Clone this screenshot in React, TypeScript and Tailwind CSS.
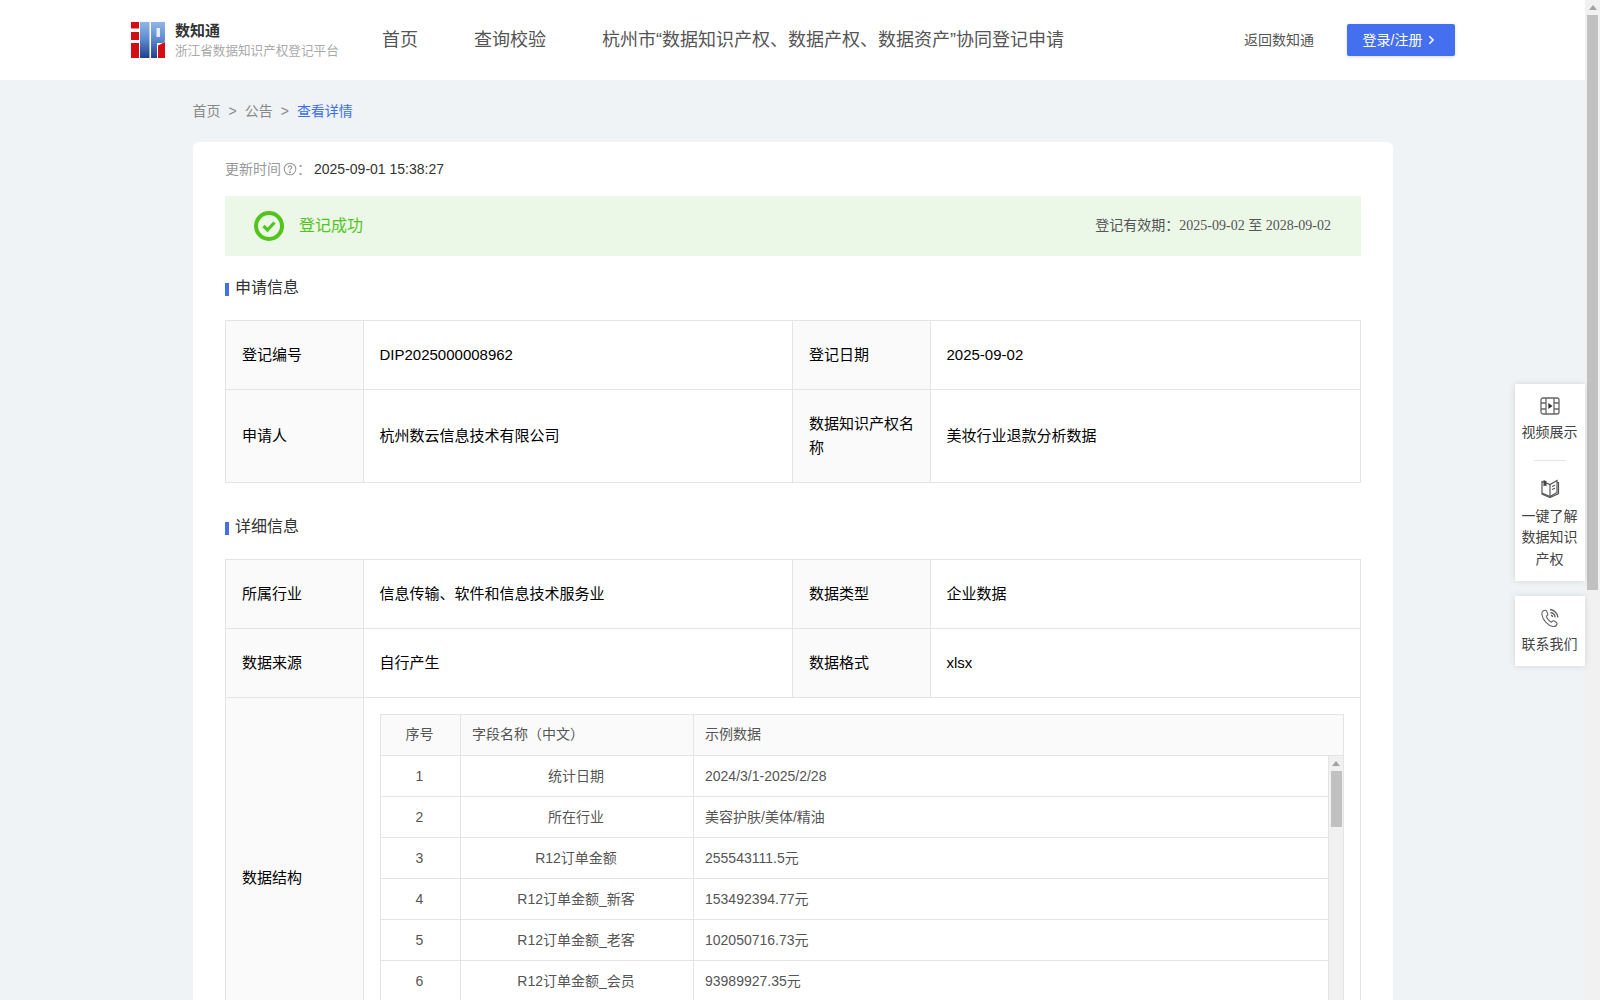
import React from "react";

const Logo = () => (
  <svg width="34" height="36" viewBox="0 0 34 36" className="shrink-0">
    <defs>
      <linearGradient id="lg" x1="0" y1="0" x2="0" y2="1">
        <stop offset="0" stopColor="#8fb6e8" />
        <stop offset="0.45" stopColor="#5f8fd2" />
        <stop offset="1" stopColor="#1f3f90" />
      </linearGradient>
    </defs>
    <rect x="0" y="0" width="8" height="6.5" fill="#d40d12" />
    <rect x="0" y="10" width="8" height="8" fill="#d40d12" />
    <rect x="0" y="21" width="8" height="15" fill="#d40d12" />
    <rect x="9" y="0" width="9.5" height="36" fill="url(#lg)" />
    <path d="M20 0H34V18C34 20 32.5 21 31 21H26V36H20Z" fill="url(#lg)" />
    <rect x="25.5" y="6" width="3.5" height="9" fill="#e6effa" />
    <path d="M27 23.5L34 20V36H27Z" fill="#d40d12" />
  </svg>
);

const VideoIcon = () => (
  <svg width="20" height="20" viewBox="0 0 20 20" fill="none" stroke="#666" strokeWidth="1.3">
    <rect x="1" y="2" width="18" height="16" rx="2" />
    <path d="M6 2V18M14 2V18M1 7H6M1 13H6M14 7H19M14 13H19" />
    <path d="M8.3 7L12.5 10L8.3 13Z" fill="#333" stroke="none" />
  </svg>
);

const BookIcon = () => (
  <svg width="20" height="20" viewBox="0 0 20 20" fill="none" stroke="#555" strokeWidth="1.2">
    <path d="M2 3.5L10 6.5L17 2.5V14.5L10 18.5L2 15Z" />
    <path d="M10 6.5V18.5M17 4.5H18.5V15.5L10 19.5L1.5 16" />
    <path d="M3.5 2L6.5 3.2V8.5L5 7.5L3.5 8.5Z" fill="#444" stroke="none" />
    <path d="M12 8.5L15 7.2M12 11.5L15 10.2" />
  </svg>
);

const PhoneIcon = () => (
  <svg width="20" height="20" viewBox="0 0 20 20" fill="none" stroke="#666" strokeWidth="1.1" strokeLinejoin="round">
    <path d="M5 2.2C3 2.6 1.6 4.2 1.9 6.5C2.6 11.8 7.6 17.6 13 18.5C15 18.8 16.6 17.6 17 16C17.2 15.2 16.8 14.7 16.1 14.2L14.1 13C13.4 12.6 12.7 12.7 12.2 13.3L11.5 14.2C9.3 13.4 6.8 10.4 6.3 8.2L7.3 7.5C7.9 7 8 6.3 7.7 5.6L6.6 3.2C6.3 2.5 5.7 2.1 5 2.2Z" />
    <path d="M10 1.5C14 1.8 17.5 5 18 9.5M10.5 4.5C13 4.9 14.8 6.6 15.2 9.3M11 7.2C12 7.5 12.5 8.2 12.7 9" strokeWidth="1.4" />
  </svg>
);

const Arrow = () => (
  <div className="h-[15px] flex items-center justify-center shrink-0">
    <div className="w-0 h-0 border-l-[4px] border-r-[4px] border-b-[5px] border-l-transparent border-r-transparent border-b-[#a3a3a3]" />
  </div>
);

const Label = ({ children, className = "" }: { children: React.ReactNode; className?: string }) => (
  <td className={`border border-[#e4e4e4] bg-[#fafafa] pl-4 pr-4 text-[15px] text-black ${className}`}>{children}</td>
);
const Val = ({ children }: { children: React.ReactNode }) => (
  <td className="border border-[#e4e4e4] pl-[15.5px] pr-4 text-[15px] text-black">{children}</td>
);

const InfoCols = () => (
  <colgroup>
    <col className="w-[138px]" />
    <col className="w-[429px]" />
    <col className="w-[138px]" />
    <col className="w-[430px]" />
  </colgroup>
);

const Section = ({ title }: { title: string }) => (
  <div className="flex items-center gap-[6px] h-6 text-base text-[#333]">
    <span className="w-1 h-[13px] bg-[#4470f0] mt-[2px]" />
    <span>{title}</span>
  </div>
);

const rows: [string, string, string][] = [
  ["1", "统计日期", "2024/3/1-2025/2/28"],
  ["2", "所在行业", "美容护肤/美体/精油"],
  ["3", "R12订单金额", "255543111.5元"],
  ["4", "R12订单金额_新客", "153492394.77元"],
  ["5", "R12订单金额_老客", "102050716.73元"],
  ["6", "R12订单金额_会员", "93989927.35元"],
];

const StructureTable = () => (
  <div className="border border-[#e4e4e4] text-[#555]">
    <div className="flex h-[41px] bg-[#fafafa] border-b border-[#e4e4e4] items-center">
      <div className="w-[80px] pr-[2px] pb-[2px] self-stretch flex items-center justify-center border-r border-[#e4e4e4]">序号</div>
      <div className="w-[233px] pl-[11px] pb-[2px] self-stretch flex items-center border-r border-[#e4e4e4]">字段名称（中文）</div>
      <div className="flex-1 pl-[11px] pb-[2px]">示例数据</div>
    </div>
    <div className="flex h-[285px] overflow-hidden">
      <div className="flex-1 min-w-0 border-r border-[#e4e4e4]">
        {rows.map((r) => (
          <div key={r[0]} className="flex h-[41px] border-b border-[#e4e4e4] items-center">
            <div className="w-[80px] pr-[2px] self-stretch flex items-center justify-center border-r border-[#e4e4e4]">{r[0]}</div>
            <div className="w-[233px] pr-[2px] self-stretch flex items-center justify-center border-r border-[#e4e4e4]">{r[1]}</div>
            <div className="flex-1 pl-[11px]">{r[2]}</div>
          </div>
        ))}
      </div>
      <div className="w-[14px] bg-[#f1f1f1] flex flex-col shrink-0">
        <Arrow />
        <div className="w-[11px] h-[56px] bg-[#c1c1c1] ml-[2px]" />
      </div>
    </div>
  </div>
);

export default function App() {
  return (
    <div className="relative flex h-screen overflow-hidden text-sm font-['Liberation_Sans','Noto_Sans_CJK_SC',sans-serif]">
      <div className="flex-1 min-w-0 flex flex-col bg-[#eff3f6]">
        <header className="h-20 shrink-0 bg-white flex items-center pl-[131px] pr-[130px]">
          <Logo />
          <div className="ml-[10px] w-[207px]">
            <div className="text-[15px] font-bold leading-[20px] text-[#333]">数知通</div>
            <div className="text-[12.6px] leading-[18px] mt-px text-[#aaa] whitespace-nowrap">浙江省数据知识产权登记平台</div>
          </div>
          <nav className="flex gap-[56px] text-lg text-[#555]">
            <span>首页</span>
            <span>查询校验</span>
            <span className="whitespace-nowrap">杭州市“数据知识产权、数据产权、数据资产”协同登记申请</span>
          </nav>
          <div className="ml-auto flex items-center gap-[33px]">
            <span className="text-[#555]">返回数知通</span>
            <button className="w-[108px] h-8 rounded-[2px] bg-[#4470f0] text-white flex items-center justify-center gap-1 pr-[3px] shadow-[0_1px_3px_rgba(68,112,240,0.25)]">
              <span className="-mt-px">登录/注册</span>
              <svg width="10" height="10" viewBox="0 0 12 12" fill="none" stroke="#fff" strokeWidth="1.8">
                <path d="M4 1.5L8.5 6L4 10.5" />
              </svg>
            </button>
          </div>
        </header>

        <main className="flex-1 min-h-0 overflow-hidden">
          <div className="ml-[193px] w-[1200px]">
            <div className="h-[62px] -ml-[0.5px] flex items-center gap-2 text-[#888]">
              <span>首页</span>
              <span>&gt;</span>
              <span>公告</span>
              <span>&gt;</span>
              <span className="text-[#3b6ff5]">查看详情</span>
            </div>
            <div className="bg-white rounded-md px-8 pb-8">
              <div className="h-[54px] flex items-center">
                <span className="text-[#999]">更新时间</span>
                <svg width="14" height="14" viewBox="0 0 14 14" fill="none" stroke="#999" strokeWidth="1.1" className="ml-[2px]">
                  <circle cx="7" cy="7" r="5.8" />
                  <path d="M5.2 5.5C5.3 3.3 8.8 3.4 8.8 5.4C8.8 6.7 7 6.7 7 8.4" />
                  <circle cx="7" cy="10.2" r="0.5" fill="#999" />
                </svg>
                <span className="text-[#999]">：</span>
                <span className="text-[#333] ml-[3px]">2025-09-01 15:38:27</span>
              </div>
              <div className="h-[60px] bg-[#ebf7e7] flex items-center pl-[29px] pr-[30px]">
                <svg width="30" height="30" viewBox="0 0 30 30" fill="none" stroke="#52c41a">
                  <circle cx="15" cy="15" r="13" strokeWidth="4" />
                  <path d="M9.5 15L13.5 19L20.5 11.5" strokeWidth="3.2" />
                </svg>
                <span className="ml-[15px] text-base text-[#52c41a] -mt-px">登记成功</span>
                <span className="ml-auto text-[#555] -mt-px">
                  登记有效期：<span className="font-['Liberation_Serif','Noto_Sans_CJK_SC',serif]">2025-09-02 至 2028-09-02</span>
                </span>
              </div>

              <div className="mt-5 mb-5">
                <Section title="申请信息" />
              </div>
              <table className="w-[1135px] table-fixed border-collapse">
                <InfoCols />
                <tbody>
                  <tr className="h-[69px]">
                    <Label>登记编号</Label>
                    <Val>DIP2025000008962</Val>
                    <Label>登记日期</Label>
                    <Val>2025-09-02</Val>
                  </tr>
                  <tr className="h-[93px]">
                    <Label>申请人</Label>
                    <Val>杭州数云信息技术有限公司</Val>
                    <Label className="leading-6">数据知识产权名称</Label>
                    <Val>美妆行业退款分析数据</Val>
                  </tr>
                </tbody>
              </table>

              <div className="mt-8 mb-5">
                <Section title="详细信息" />
              </div>
              <table className="w-[1135px] table-fixed border-collapse">
                <InfoCols />
                <tbody>
                  <tr className="h-[69px]">
                    <Label>所属行业</Label>
                    <Val>信息传输、软件和信息技术服务业</Val>
                    <Label>数据类型</Label>
                    <Val>企业数据</Val>
                  </tr>
                  <tr className="h-[69px]">
                    <Label>数据来源</Label>
                    <Val>自行产生</Val>
                    <Label>数据格式</Label>
                    <Val>xlsx</Val>
                  </tr>
                  <tr className="h-[361px]">
                    <Label>数据结构</Label>
                    <td colSpan={3} className="border border-[#e4e4e4] p-4">
                      <StructureTable />
                    </td>
                  </tr>
                </tbody>
              </table>
            </div>
          </div>
        </main>
      </div>

      <div className="w-[15px] shrink-0 bg-[#f1f1f1] flex flex-col">
        <Arrow />
        <div className="w-[11px] h-[575px] bg-[#c1c1c1] ml-[2px]" />
      </div>

      <aside className="absolute right-[15px] top-[384px] w-[70px] flex flex-col gap-[15px] text-center text-[#444] leading-[21.5px]">
        <div className="bg-white shadow-[0_0_6px_rgba(0,0,0,0.12)] pt-3 pb-[11px] pr-px flex flex-col items-center">
          <VideoIcon />
          <div className="mt-[6px]">视频展示</div>
          <div className="w-8 h-px bg-[#e4e4e4] mt-4 mb-[17px]" />
          <BookIcon />
          <div className="mt-2 w-[60px]">一键了解数据知识产权</div>
        </div>
        <div className="bg-white shadow-[0_0_6px_rgba(0,0,0,0.12)] pt-3 pb-[10px] pr-px flex flex-col items-center">
          <PhoneIcon />
          <div className="mt-[6px]">联系我们</div>
        </div>
      </aside>
    </div>
  );
}
